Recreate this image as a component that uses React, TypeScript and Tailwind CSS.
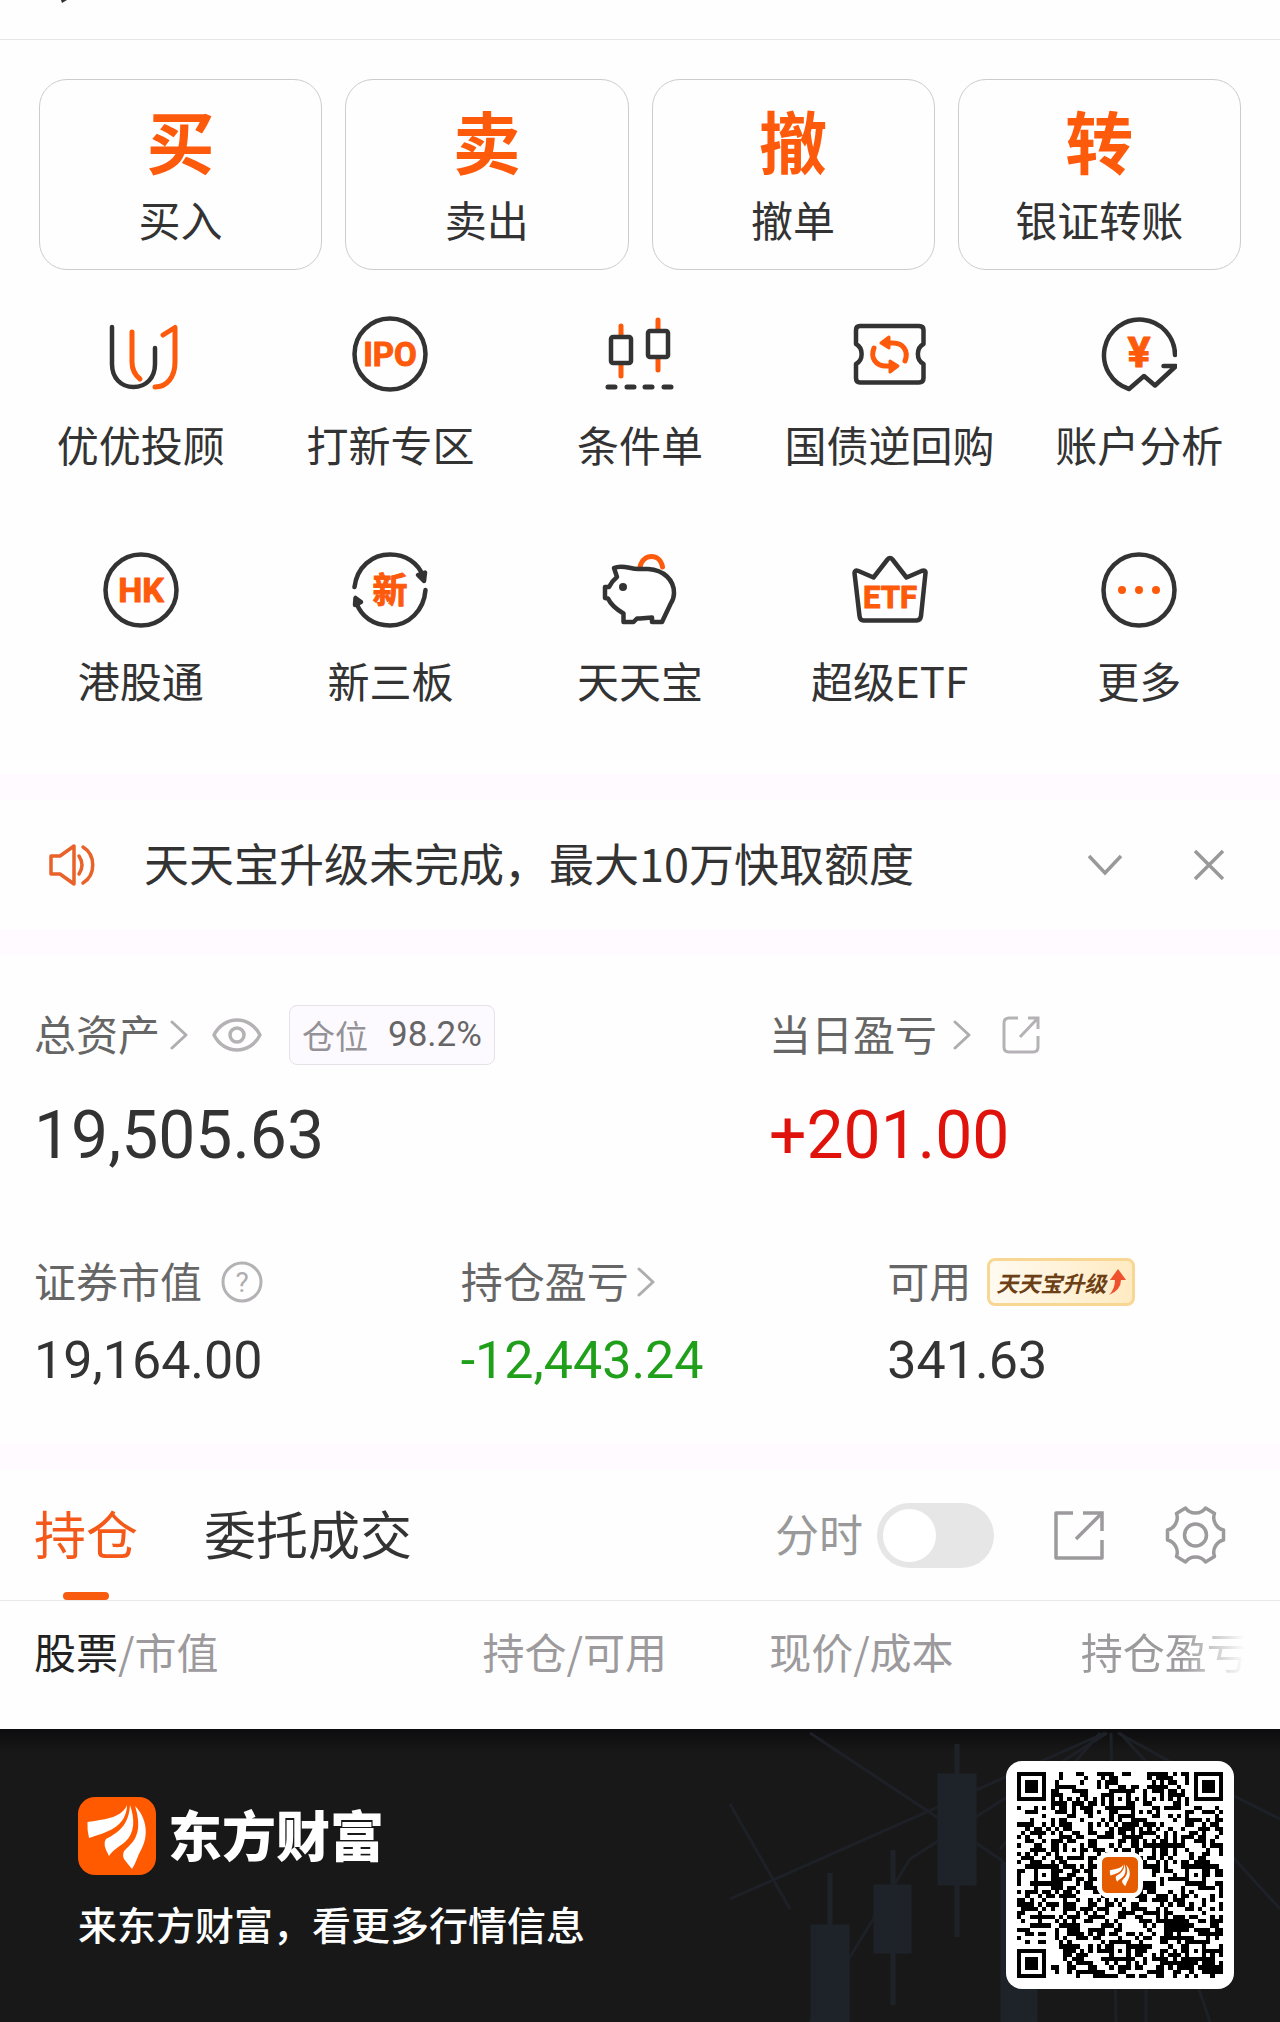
import { useState } from 'react';
import type { ReactNode } from 'react';

const ORANGE = '#fd5a0c';
const DARK = '#333333';

function FeatherMark() {
  return (
    <g fill="#fff">
      <path d="M49 8C44 20 30 22 9.5 25Q9 33 11 41C22 37 28 36 36 31C44 26 49 18 49 8Z" />
      <path d="M52 8C51 25 44 34 28 42Q24 47 31 59C36 52 41 50 47 45C57 36 57 22 52 8Z" />
      <path d="M57 9C63 28 61 41 49 51Q43 56 46 62Q49 66 54 72C58 66 59 60 63 53C71 39 69 21 57 9Z" />
    </g>
  );
}

function ToolIcon({ children }: { children: ReactNode }) {
  return (
    <svg
      viewBox="0 0 76 76"
      className="size-[76px]"
      fill="none"
      stroke={DARK}
      strokeWidth={4.5}
      strokeLinecap="round"
      strokeLinejoin="round"
      aria-hidden="true"
    >
      {children}
    </svg>
  );
}

function IconText({ y, size, children }: { y: number; size: number; children: string }) {
  return (
    <text
      x="38"
      y={y}
      textAnchor="middle"
      fontSize={size}
      fontWeight="700"
      fill={ORANGE}
      stroke={ORANGE}
      strokeWidth="1"
      fontFamily="Roboto, 'Noto Sans CJK SC', sans-serif"
    >
      {children}
    </text>
  );
}

const tradeActions = [
  { mark: '买', label: '买入' },
  { mark: '卖', label: '卖出' },
  { mark: '撤', label: '撤单' },
  { mark: '转', label: '银证转账' },
];

const tools: { label: string; icon: ReactNode }[] = [
  {
    label: '优优投顾',
    icon: (
      <>
        <path d="M9 11V48C9 62 18 71 30.5 71S52 62 52 48V32" />
        <g stroke={ORANGE} strokeWidth="5">
          <path d="M29 16V46C29 53 32 59 37 63" />
          <path d="M60 19L72 11.5V46C72 61 64 71 52 71" />
        </g>
      </>
    ),
  },
  {
    label: '打新专区',
    icon: (
      <>
        <circle cx="38" cy="38" r="35.5" />
        <IconText y={50} size={33}>IPO</IconText>
      </>
    ),
  },
  {
    label: '条件单',
    icon: (
      <>
        <path d="M19 10V60M56 4V54" stroke={ORANGE} strokeWidth="5" />
        <rect x="9" y="21" width="20" height="26" rx="2" fill="#fff" />
        <rect x="46" y="15" width="20" height="26" rx="2" fill="#fff" />
        <path d="M6 71H13M25 71H32M43 71H50M62 71H69" strokeWidth="5" />
      </>
    ),
  },
  {
    label: '国债逆回购',
    icon: (
      <>
        <path d="M8 10H67Q71.500 10 71.500 14V28C64 32 64 44 71.500 48V62Q71.500 66.500 67 66.500H8Q4 66.500 4 62V48C11.500 44 11.500 32 4 28V14Q4 10 8 10Z" />
        <g stroke={ORANGE} strokeWidth="5">
          <path d="M22 32C18 42 24 50 34 50H39" />
          <path d="M53 45C57 35 51 27 41 27H37" />
          <path d="M38 45L46 50L38 56Z" fill={ORANGE} strokeWidth="3" />
          <path d="M37 21L29 27L37 32Z" fill={ORANGE} strokeWidth="3" />
        </g>
      </>
    ),
  },
  {
    label: '账户分析',
    icon: (
      <>
        <path d="M74 39A35.500 35.500 0 1 0 28 73L43 60L54 69.500L75 50H62.500" />
        <IconText y={51} size={43}>¥</IconText>
      </>
    ),
  },
  {
    label: '港股通',
    icon: (
      <>
        <circle cx="38" cy="38" r="35.5" />
        <IconText y={50} size={34}>HK</IconText>
      </>
    ),
  },
  {
    label: '新三板',
    icon: (
      <>
        <path d="M2.500 35C5 15 20 2.500 38 2.500C54 2.500 66 11 71 24" />
        <path d="M73.500 38C72 58 57 73.500 38 73.500C21 73.500 9 64 4.500 51" />
        <path d="M66 23L73 20.500L72 29Z" fill={DARK} />
        <path d="M3.500 46L3 53L9 50Z" fill={DARK} />
        <IconText y={51} size={35}>新</IconText>
      </>
    ),
  },
  {
    label: '天天宝',
    icon: (
      <>
        <path d="M38 15C41 1 58 1 60.500 15" stroke={ORANGE} strokeWidth="5" />
        <path
          d="M15 25L12 16C20 12 28 17 36 17H46C62 18 72 28 72 41Q72 47 68.500 52L60 70H50V65.500L38 66.500H35L31.500 70H21.500V61.500C14 57 9 53 6 46.500L3 46V35H7Q10 29 15 25Z"
          fill="#fff"
        />
        <circle cx="21" cy="35" r="4" fill={DARK} stroke="none" />
      </>
    ),
  },
  {
    label: '超级ETF',
    icon: (
      <>
        <path d="M2.500 21Q2.500 17.500 6.500 19L21.500 25.500L35.500 7.500Q38 4.500 40.500 7.500L54.500 25.500L69.500 19Q74 17.500 73.500 21L69 64Q68.500 68.500 64.500 68.500H11.500Q8 68.500 7.500 64Z" />
        <IconText y={56} size={31}>ETF</IconText>
      </>
    ),
  },
  {
    label: '更多',
    icon: (
      <>
        <circle cx="38" cy="38" r="35.5" />
        <g fill={ORANGE} stroke="none">
          <circle cx="21" cy="38" r="4" />
          <circle cx="38" cy="38" r="4" />
          <circle cx="55" cy="38" r="4" />
        </g>
      </>
    ),
  },
];

function ChevronRight() {
  return (
    <svg viewBox="0 0 18 30" className="h-[30px] w-[18px]" fill="none" stroke="#b0adb0" strokeWidth="3" aria-hidden="true">
      <path d="M2 2L16 15L2 28" strokeLinecap="round" strokeLinejoin="round" />
    </svg>
  );
}

function Band() {
  return <div className="h-[26px] bg-[#fefaff]" />;
}

interface FigureProps {
  label: string;
  extra: ReactNode;
  value: string;
  color: string;
}

function Figure({ label, extra, value, color }: FigureProps) {
  return (
    <div className="pl-[34px]">
      <div className="flex h-14 items-center">
        <span className="pb-1 text-[42px] leading-13 text-[#666]">{label}</span>
        {extra}
      </div>
      <div className={`mt-[18px] font-[Roboto] text-[52px] leading-[66px] ${color}`}>{value}</div>
    </div>
  );
}

// Version 8 code: 49 modules a side, alignment centres at 6, 24 and 42.
const QR_SIZE = 49;

function qrModule(x: number, y: number, noise: () => number) {
  const bit = noise() > 0.5;
  for (const [fx, fy] of [[0, 0], [QR_SIZE - 7, 0], [0, QR_SIZE - 7]]) {
    const dx = x - fx;
    const dy = y - fy;
    if (dx >= -1 && dx <= 7 && dy >= -1 && dy <= 7) {
      const ring = Math.max(Math.abs(dx - 3), Math.abs(dy - 3));
      return ring === 3 || ring <= 1;
    }
  }
  for (const [ax, ay] of [[24, 6], [6, 24], [42, 24], [24, 42], [42, 42]]) {
    const ring = Math.max(Math.abs(x - ax), Math.abs(y - ay));
    if (ring <= 2) return ring !== 1;
  }
  if (x === 6 || y === 6) return (x + y) % 2 === 0;
  return bit;
}

function buildQrPath() {
  let seed = 20240;
  const noise = () => {
    seed = (seed * 1103515245 + 12345) % 2147483648;
    return seed / 2147483648;
  };
  let d = '';
  for (let y = 0; y < QR_SIZE; y++) {
    for (let x = 0; x < QR_SIZE; x++) {
      if (qrModule(x, y, noise)) d += `M${x} ${y}h1v1h-1z`;
    }
  }
  return d;
}

const qrPath = buildQrPath();

function QrCode() {
  return (
    <div className="relative size-[228px] rounded-2xl bg-white p-[11px]">
      <svg viewBox="0 0 49 49" className="size-full" shapeRendering="crispEdges" role="img" aria-label="二维码">
        <path d={qrPath} fill="#000" />
      </svg>
      <div className="absolute inset-0 m-auto size-[46px] rounded-xl bg-white p-[5px]">
        <svg viewBox="0 0 78 78" className="size-full" aria-hidden="true">
          <rect width="78" height="78" rx="12" fill="#e65c00" />
          <g transform="translate(10 10) scale(0.74)">
            <FeatherMark />
          </g>
        </svg>
      </div>
    </div>
  );
}

function FooterArt() {
  return (
    <svg
      viewBox="0 0 580 293"
      preserveAspectRatio="xMaxYMin slice"
      className="absolute top-0 right-0 h-full w-[580px]"
      fill="none"
      aria-hidden="true"
    >
      <g stroke="#1d2127" strokeWidth="3">
        <path d="M405 4L30 170M407 4L210 130L110 293M411 4L416 293M418 4L520 60L580 90" />
        <path d="M110 4L300 130L360 190L300 240M400 4L300 120M420 4L580 180M446 230V293M492 240L510 293M30 75L90 180" />
      </g>
      <g fill="#1e2329" stroke="#1e2329" strokeWidth="5">
        <path d="M130 144V293M193 121V276M257 15V208" />
        <path d="M113 198H147V293H113ZM176 158H209V222H176ZM240 47H274V154H240ZM303 136H335V293H303Z" />
      </g>
    </svg>
  );
}

export default function App() {
  const [intraday, setIntraday] = useState(false);
  const [hidden, setHidden] = useState(false);

  return (
    <div className="w-full bg-[#fefefe] font-['Noto_Sans_CJK_SC',sans-serif] text-[#333]">
      <div className="h-10 border-b border-[#e6e6e6] pl-[61px]">
        <svg viewBox="0 0 6 4" className="h-1 w-1.5" aria-hidden="true">
          <path d="M0 0H6L1 3Z" fill={DARK} />
        </svg>
      </div>

      <div className="grid grid-cols-4 gap-[23px] px-[39px] pt-[39px]">
        {tradeActions.map(({ mark, label }) => (
          <button
            key={label}
            type="button"
            className="flex h-[191px] flex-col items-center rounded-[28px] border border-[#ccc] pt-6"
          >
            <span className="text-[68px] leading-[72px] font-bold text-[#fd5a0c]">{mark}</span>
            <span className="mt-[15px] text-[42px] leading-14">{label}</span>
          </button>
        ))}
      </div>

      <div className="grid grid-cols-5 gap-y-20 px-4 pt-[46px] pb-[66px]">
        {tools.map(({ label, icon }) => (
          <button key={label} type="button" className="flex flex-col items-center">
            <ToolIcon>{icon}</ToolIcon>
            <span className="mt-6 text-[42px] leading-14 whitespace-nowrap">{label}</span>
          </button>
        ))}
      </div>

      <Band />
      <div className="flex h-[129px] items-center pr-[55px] pl-12">
        <svg
          viewBox="0 0 48 44"
          className="h-11 w-12 shrink-0"
          fill="none"
          stroke="#e8622a"
          strokeWidth="3.5"
          strokeLinejoin="round"
          strokeLinecap="round"
          aria-hidden="true"
        >
          <path d="M3 13H12L26 3V41L12 31H3Z" />
          <path d="M31 13Q37 22 31 31M35 4C48 12 48 32 35 40" />
        </svg>
        <p className="ml-12 flex-1 pb-1 text-[45px] leading-[60px] whitespace-nowrap">
          天天宝升级未完成，最大10万快取额度
        </p>
        <button type="button" aria-label="展开">
          <svg viewBox="0 0 36 22" className="h-[22px] w-9" fill="none" stroke="#999" strokeWidth="3.5" aria-hidden="true">
            <path d="M2 2L18 19L34 2" />
          </svg>
        </button>
        <button type="button" aria-label="关闭" className="ml-[70px]">
          <svg viewBox="0 0 32 32" className="size-8" fill="none" stroke="#999" strokeWidth="3.5" aria-hidden="true">
            <path d="M2 2L30 30M30 2L2 30" />
          </svg>
        </button>
      </div>
      <Band />

      <div className="py-[50px]">
        <div className="grid grid-cols-[735fr_545fr]">
          <div className="pl-[34px]">
            <div className="flex h-15 items-center">
              <span className="pb-1 text-[42px] leading-13 text-[#666]">总资产</span>
              <span className="ml-2.5">
                <ChevronRight />
              </span>
              <button type="button" aria-label="隐藏金额" className="ml-6" onClick={() => setHidden(!hidden)}>
                <svg viewBox="0 0 50 34" className="h-[34px] w-[50px]" fill="none" stroke="#b5b2b5" strokeWidth="3.5" aria-hidden="true">
                  <path d="M2 17C12 -3 38 -3 48 17C38 37 12 37 2 17Z" strokeLinejoin="round" />
                  <circle cx="25" cy="17" r="7" />
                </svg>
              </button>
              <span className="ml-[27px] flex h-15 items-center gap-5 rounded-lg border border-[#e6e2e8] bg-[#fdfaff] px-3">
                <span className="text-[33px] leading-10 text-[#949296]">仓位</span>
                <span className="font-[Roboto] text-[35px] leading-10 text-[#666]">98.2%</span>
              </span>
            </div>
            <div className="mt-[31px] font-[Roboto] text-[66px] leading-20">{hidden ? '****' : '19,505.63'}</div>
          </div>
          <div className="pl-[34px]">
            <div className="flex h-15 items-center">
              <span className="pb-1 text-[42px] leading-13 text-[#666]">当日盈亏</span>
              <span className="ml-4">
                <ChevronRight />
              </span>
              <button type="button" aria-label="分享盈亏" className="ml-[31px]">
                <svg viewBox="0 0 38 38" className="size-[38px]" fill="none" stroke="#b5b2b5" strokeWidth="3" aria-hidden="true">
                  <path d="M16 2H7Q2 2 2 7V31Q2 36 7 36H31Q36 36 36 31V20" />
                  <path d="M26 2H36V13M36 2L18 21" />
                </svg>
              </button>
            </div>
            <div className="mt-[31px] font-[Roboto] text-[66px] leading-20 text-[#e0120c]">
              {hidden ? '****' : '+201.00'}
            </div>
          </div>
        </div>

        <div className="mt-[78px] grid grid-cols-3">
          <Figure
            label="证券市值"
            extra={
              <svg viewBox="0 0 42 42" className="ml-[19px] size-[42px]" aria-hidden="true">
                <circle cx="21" cy="21" r="19" fill="none" stroke="#b5b2b5" strokeWidth="3" />
                <text x="21" y="31" textAnchor="middle" fontSize="28" fill="#b0adb0" fontFamily="Roboto, sans-serif">
                  ?
                </text>
              </svg>
            }
            value="19,164.00"
            color="text-[#333]"
          />
          <Figure
            label="持仓盈亏"
            extra={
              <span className="ml-2">
                <ChevronRight />
              </span>
            }
            value="-12,443.24"
            color="text-[#1f9f1a]"
          />
          <Figure
            label="可用"
            extra={
              <span className="ml-4 flex h-12 items-center rounded-lg border-3 border-[#f8d795] bg-linear-to-r from-[#fffaf0] to-[#ffebc2] px-1.5 text-[22px] leading-8 font-bold text-[#6d3f16] italic">
                天天宝升级
                <svg viewBox="0 0 20 26" className="h-[26px] w-5" aria-hidden="true">
                  <path d="M12 0L20 11H15Q15 21 3 26Q9 20 9 11H4Z" fill="#f0512d" />
                </svg>
              </span>
            }
            value="341.63"
            color="text-[#333]"
          />
        </div>
      </div>

      <Band />

      <div className="flex h-[131px] items-center border-b border-[#e8e8e8] pr-[54px] pl-[34px]">
        <button type="button" className="relative h-full pb-1 text-[52px] leading-[68px] text-[#f4591a]">
          持仓
          <span className="absolute inset-x-0 bottom-0 mx-auto h-2 w-[46px] rounded-full bg-[#f85a0e]" />
        </button>
        <button type="button" className="ml-[66px] h-full pb-1 text-[52px] leading-[68px]">
          委托成交
        </button>
        <label htmlFor="intraday" className="ml-auto pb-1 text-[44px] leading-15 text-[#999]">
          分时
        </label>
        <input
          id="intraday"
          type="checkbox"
          role="switch"
          checked={intraday}
          onChange={(e) => setIntraday(e.target.checked)}
          className="ml-3.5 h-[65px] w-[117px] appearance-none rounded-full bg-[#e6e6e6] p-1.5 before:block before:size-[53px] before:rounded-full before:bg-white checked:bg-[#fd5a0c] checked:before:ml-auto"
        />
        <button type="button" aria-label="分享" className="ml-[59px]">
          <svg viewBox="0 0 52 52" className="size-[52px]" fill="none" stroke="#9c9a9c" strokeWidth="3.5" aria-hidden="true">
            <path d="M20 4H3V49H49V31" strokeLinejoin="round" />
            <path d="M30 4H49V22M48 5L23 30" />
          </svg>
        </button>
        <button type="button" aria-label="设置" className="ml-15">
          <svg viewBox="0 0 61 60" className="h-15 w-[61px]" fill="none" stroke="#9c9a9c" strokeWidth="3.5" strokeLinejoin="round" aria-hidden="true">
            <path d="M20.500 3Q24 8 30.500 8Q37 8 40.500 3L49.500 8.500Q47.500 14 50.500 19Q53.500 24 58.500 25V35Q53.500 36 50.500 41Q47.500 46 49.500 51.500L40.500 57Q37 52 30.500 52Q24 52 20.500 57L11.500 51.500Q13.500 46 10.500 41Q7.500 36 2.500 35V25Q7.500 24 10.500 19Q13.500 14 11.500 8.500Z" />
            <circle cx="30.500" cy="30" r="11" />
          </svg>
        </button>
      </div>

      <div className="h-32 pt-[22px] pl-[34px]">
        <table className="w-full table-fixed text-left text-[42px] leading-14 whitespace-nowrap text-[#9c9a9c]">
          <thead>
            <tr>
              <th className="w-[36%] font-normal">
                <span className="text-[#222]">股票</span>/市值
              </th>
              <th className="w-[23%] font-normal">持仓/可用</th>
              <th className="w-[25%] font-normal">现价/成本</th>
              <th className="w-[16%] font-normal">
                <span className="bg-linear-to-r from-[#9c9a9c] from-60% to-white to-98% bg-clip-text text-transparent">
                  持仓盈亏
                </span>
              </th>
            </tr>
          </thead>
        </table>
      </div>

      <footer className="relative flex h-[293px] items-start justify-between bg-[#181818] bg-linear-to-b from-[#0d0d0f] from-0% via-[#181818] via-8% to-[#181818] pr-[46px] pl-[78px]">
        <FooterArt />
        <div className="relative pt-[68px]">
          <div className="flex items-center gap-3">
            <svg viewBox="0 0 78 78" className="size-[78px]" aria-hidden="true">
              <rect width="78" height="78" rx="17" fill="#ff5a00" />
              <FeatherMark />
            </svg>
            <span className="pb-1 text-[54px] leading-[72px] font-black text-white">东方财富</span>
          </div>
          <p className="mt-[22px] text-[39px] leading-[52px] font-medium text-white">来东方财富，看更多行情信息</p>
        </div>
        <div className="relative pt-8">
          <QrCode />
        </div>
      </footer>
    </div>
  );
}
